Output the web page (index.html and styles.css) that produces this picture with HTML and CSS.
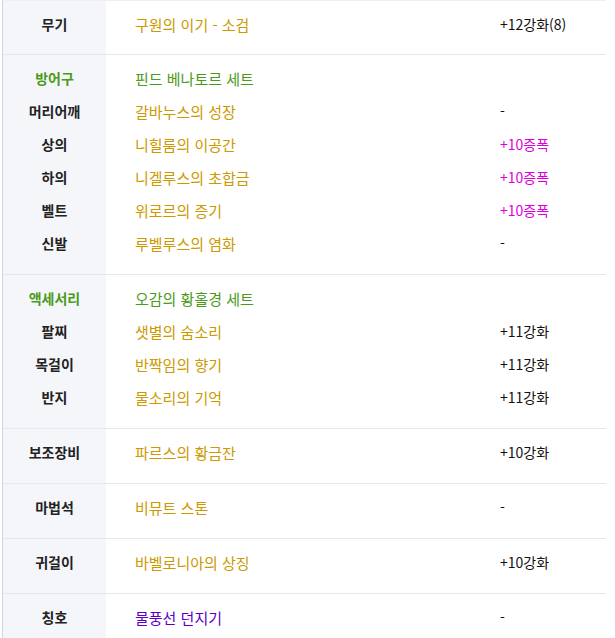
FILE: index.html
```html
<!DOCTYPE html>
<html lang="ko">
<head>
<meta charset="utf-8">
<title>장비</title>
<link rel="stylesheet" href="styles.css">
</head>
<body>
<div class="table">
  <div class="group">
    <div class="k"><div class="ln">무기</div></div>
    <div class="v"><div class="ln gold">구원의 이기 - 소검</div></div>
    <div class="e"><div class="ln">+12강화(8)</div></div>
  </div>
  <div class="group">
    <div class="k">
      <div class="ln green">방어구</div>
      <div class="ln">머리어깨</div>
      <div class="ln">상의</div>
      <div class="ln">하의</div>
      <div class="ln">벨트</div>
      <div class="ln">신발</div>
    </div>
    <div class="v">
      <div class="ln green">핀드 베나토르 세트</div>
      <div class="ln gold">갈바누스의 성장</div>
      <div class="ln gold">니힐룸의 이공간</div>
      <div class="ln gold">니겔루스의 초합금</div>
      <div class="ln gold">위로르의 증기</div>
      <div class="ln gold">루벨루스의 염화</div>
    </div>
    <div class="e">
      <div class="ln"></div>
      <div class="ln">-</div>
      <div class="ln pink">+10증폭</div>
      <div class="ln pink">+10증폭</div>
      <div class="ln pink">+10증폭</div>
      <div class="ln">-</div>
    </div>
  </div>
  <div class="group">
    <div class="k">
      <div class="ln green">액세서리</div>
      <div class="ln">팔찌</div>
      <div class="ln">목걸이</div>
      <div class="ln">반지</div>
    </div>
    <div class="v">
      <div class="ln green">오감의 황홀경 세트</div>
      <div class="ln gold">샛별의 숨소리</div>
      <div class="ln gold">반짝임의 향기</div>
      <div class="ln gold">물소리의 기억</div>
    </div>
    <div class="e">
      <div class="ln"></div>
      <div class="ln">+11강화</div>
      <div class="ln">+11강화</div>
      <div class="ln">+11강화</div>
    </div>
  </div>
  <div class="group">
    <div class="k"><div class="ln">보조장비</div></div>
    <div class="v"><div class="ln gold">파르스의 황금잔</div></div>
    <div class="e"><div class="ln">+10강화</div></div>
  </div>
  <div class="group">
    <div class="k"><div class="ln">마법석</div></div>
    <div class="v"><div class="ln gold">비뮤트 스톤</div></div>
    <div class="e"><div class="ln">-</div></div>
  </div>
  <div class="group">
    <div class="k"><div class="ln">귀걸이</div></div>
    <div class="v"><div class="ln gold">바벨로니아의 상징</div></div>
    <div class="e"><div class="ln">+10강화</div></div>
  </div>
  <div class="group">
    <div class="k"><div class="ln">칭호</div></div>
    <div class="v"><div class="ln purple">물풍선 던지기</div></div>
    <div class="e"><div class="ln">-</div></div>
  </div>
</div>
</body>
</html>
```

FILE: styles.css
```css
html, body {
  margin: 0;
  padding: 0;
  background: #ffffff;
}

body {
  font-family: "Noto Sans CJK KR", "Noto Sans", sans-serif;
  font-size: 14px;
  color: #111111;
}

.table {
  width: 603px;
  margin-left: 2px;
  border-left: 1px solid #d3d4e0;
  border-top: 1px solid #efefef;
}

.group {
  display: grid;
  grid-template-columns: 103px 394px 1fr;
  border-bottom: 1px solid #e6e7ea;
}

.k {
  background: #f5f6fa;
  text-align: center;
  font-weight: 700;
  color: #222222;
  padding: 7px 0 14px;
}

.v {
  padding: 7px 0 14px 29px;
  font-size: 15px;
}

.e {
  padding: 7px 0 14px;
  color: #111111;
}

.group:first-child .k,
.group:first-child .v,
.group:first-child .e {
  padding-bottom: 13px;
}

.ln {
  height: 33px;
  line-height: 33px;
  white-space: nowrap;
}

.gold { color: #cc9900; }
.green { color: #4c9a1c; }
.pink { color: #dd00dd; }
.purple { color: #5a00c8; }
```
